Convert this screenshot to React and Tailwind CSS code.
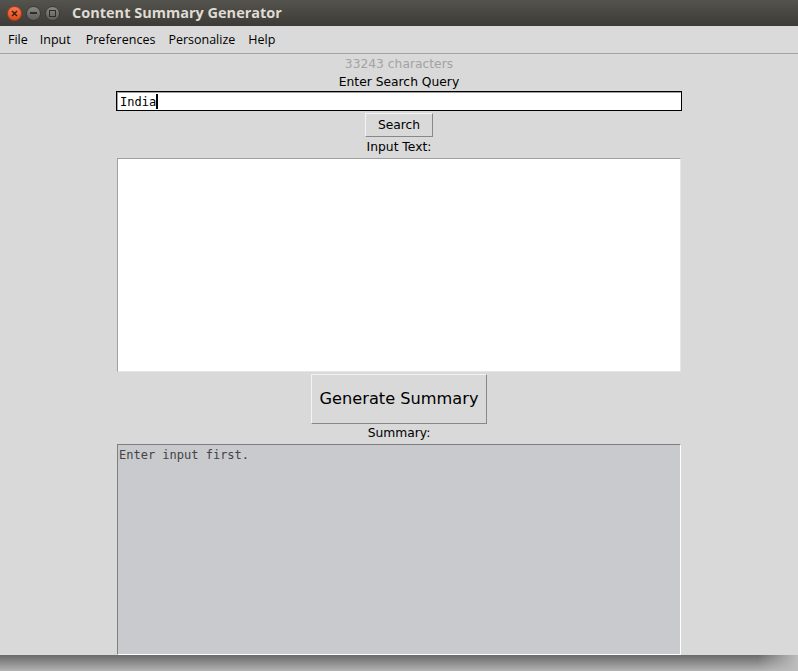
import React from "react";

export default function App() {
  const ui = { fontFamily: '"DejaVu Sans", "Liberation Sans", sans-serif' };
  const mono = { fontFamily: '"DejaVu Sans Mono", "Liberation Mono", monospace' };
  return (
    <div className="w-[798px] h-[671px] bg-[#b0b0b0] overflow-hidden flex flex-col">
      {/* title bar */}
      <div className="h-[26px] shrink-0 flex items-center bg-gradient-to-b from-[#55534e] to-[#3c3b37] pl-[7px]">
        <div className="w-[15px] h-[15px] rounded-full bg-gradient-to-b from-[#f47a52] to-[#df4b16] border border-[#b23a10] flex items-center justify-center">
          <svg width="7" height="7" viewBox="0 0 7 7"><path d="M1 1L6 6M6 1L1 6" stroke="#3c1a0c" strokeWidth="1.4" /></svg>
        </div>
        <div className="ml-[4px] w-[15px] h-[15px] rounded-full bg-gradient-to-b from-[#8a8883] to-[#5f5d58] border border-[#3a3935] flex items-center justify-center">
          <div className="w-[7px] h-[1.5px] bg-[#2e2d2a]" />
        </div>
        <div className="ml-[4px] w-[15px] h-[15px] rounded-full bg-gradient-to-b from-[#8a8883] to-[#5f5d58] border border-[#3a3935] flex items-center justify-center">
          <div className="w-[7px] h-[7px] border border-[#2e2d2a]" />
        </div>
        <div className="ml-[12px] text-[14.5px] font-bold text-[#dfdbd2]" style={{ fontFamily: '"Open Sans", "DejaVu Sans", sans-serif' }}>
          Content Summary Generator
        </div>
      </div>
      {/* menu bar */}
      <div className="h-[28px] shrink-0 bg-[#dadada] border-b border-[#a3a3a3] flex items-center pt-[1px] text-[12.5px] text-black" style={{ fontFamily: '"Open Sans", "DejaVu Sans", sans-serif' }}>
        <span className="ml-[8px]">File</span>
        <span className="ml-[12px]">Input</span>
        <span className="ml-[15px]">Preferences</span>
        <span className="ml-[13px]">Personalize</span>
        <span className="ml-[13px]">Help</span>
      </div>
      {/* content */}
      <div className="h-[601px] shrink-0 bg-[#d9d9d9] flex flex-col items-center text-[12.3px] text-black" style={ui}>
        <div className="h-[18px] leading-[20px] text-[#a3a3a3]">33243 characters</div>
        <div className="h-[19px] leading-[21px]">Enter Search Query</div>
        <div className="w-[566px] h-[20px] border border-black bg-white flex items-center">
          <div className="w-full h-full border-t border-l border-[#a0a0a0] flex items-center pl-[2px] text-[12px]" style={mono}>
            India<span className="w-[2px] h-[15px] bg-black inline-block" />
          </div>
        </div>
        <div className="mt-[2px] w-[68px] h-[24px] bg-[#d9d9d9] border border-t-[#f4f4f4] border-l-[#f4f4f4] border-b-[#888] border-r-[#888] flex items-center justify-center">
          Search
        </div>
        <div className="h-[20px] leading-[21px]">Input Text:</div>
        <div className="mt-[1px] w-[564px] h-[214px] bg-white border border-t-[#a0a0a0] border-l-[#a0a0a0] border-b-[#e6e6e6] border-r-[#e6e6e6]" />
        <div className="mt-[2px] w-[176px] h-[50px] bg-[#d9d9d9] border border-t-[#f4f4f4] border-l-[#f4f4f4] border-b-[#888] border-r-[#888] flex items-center justify-center text-[16.2px] pt-[1px]">
          Generate Summary
        </div>
        <div className="h-[19px] leading-[19px]">Summary:</div>
        <div className="mt-[1px] w-[564px] flex-1 bg-[#c9cacd] border border-t-[#7f7f7f] border-l-[#7f7f7f] border-b-white border-r-white pl-[1px] pt-[1px] text-[12px] text-[#444]" style={mono}>
          Enter input first.
        </div>
      </div>
      {/* shadow */}
      <div className="flex-1 relative bg-gradient-to-b from-[#6a6a6a] to-[#b4b4b4]">
        <div className="absolute right-0 top-0 bottom-0 w-[40px] bg-gradient-to-r from-transparent to-[#bdbdbd]" />
      </div>
    </div>
  );
}
